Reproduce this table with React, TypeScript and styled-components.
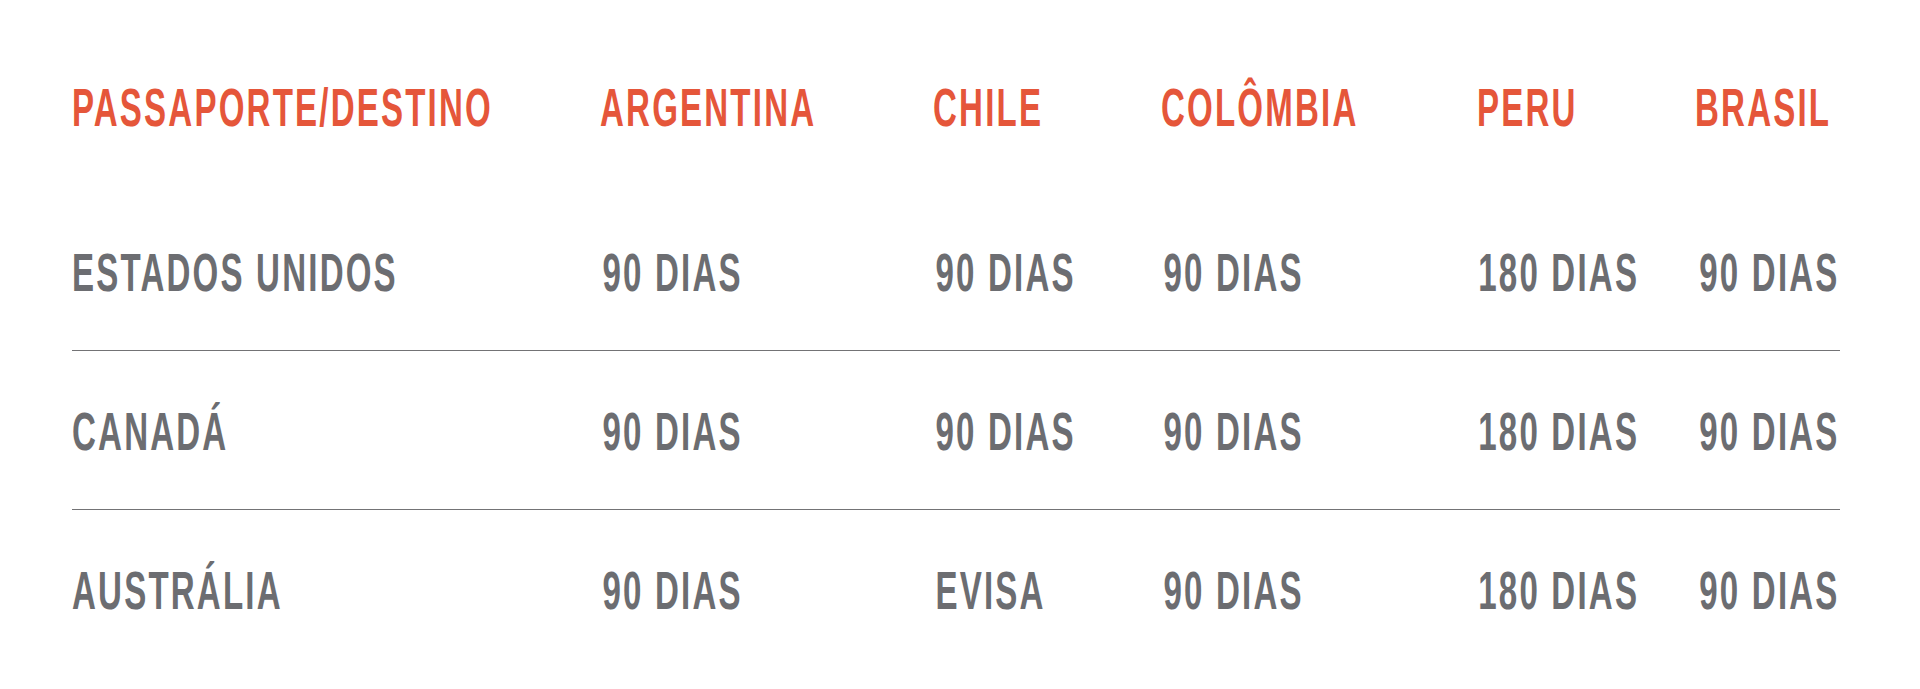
import styled, { createGlobalStyle } from "styled-components";

const GlobalStyle = createGlobalStyle`
  html, body {
    margin: 0;
    padding: 0;
    background: #ffffff;
  }
`;

const columns = ["ARGENTINA", "CHILE", "COLÔMBIA", "PERU", "BRASIL"];
// small nudge of the values under each destination column
const valueIndent = [4, 4, 4, 2, 7];

const rows = [
  { passport: "ESTADOS UNIDOS", values: ["90 DIAS", "90 DIAS", "90 DIAS", "180 DIAS", "90 DIAS"] },
  { passport: "CANADÁ", values: ["90 DIAS", "90 DIAS", "90 DIAS", "180 DIAS", "90 DIAS"] },
  { passport: "AUSTRÁLIA", values: ["90 DIAS", "EVISA", "90 DIAS", "180 DIAS", "90 DIAS"] },
];

export default function App() {
  return (
    <>
      <GlobalStyle />
      <Table>
        <HeadRow>
          <Cell $head>PASSAPORTE/DESTINO</Cell>
          {columns.map((c) => (
            <Cell key={c} $head>{c}</Cell>
          ))}
        </HeadRow>
        {rows.map((r, i) => (
          <Row key={r.passport} $last={i === rows.length - 1}>
            <Cell>{r.passport}</Cell>
            {r.values.map((v, j) => (
              <Cell key={j} $indent={valueIndent[j]}>{v}</Cell>
            ))}
          </Row>
        ))}
      </Table>
    </>
  );
}

const Table = styled.div`
  padding: 0 80px 0 72px;
  width: 1768px;
`;

const Grid = styled.div`
  display: grid;
  grid-template-columns: 528px 333px 228px 316px 218px 145px;
`;

const HeadRow = styled(Grid)`
  padding: 80px 0 58px;
`;

const Row = styled(Grid)<{ $last?: boolean }>`
  padding: 53px 0 51px;
  border-bottom: ${(p) => (p.$last ? "none" : "1px solid #737375")};
`;

const Cell = styled.span<{ $head?: boolean; $indent?: number }>`
  display: block;
  white-space: nowrap;
  padding-left: ${(p) => p.$indent ?? 0}px;
  font-family: "Liberation Sans", Arial, sans-serif;
  font-weight: 700;
  font-size: 54px;
  line-height: 54px;
  letter-spacing: 3.6px;
  color: ${(p) => (p.$head ? "#e5563a" : "#6c6d71")};
  transform: scaleX(0.612);
  transform-origin: left center;
`;
